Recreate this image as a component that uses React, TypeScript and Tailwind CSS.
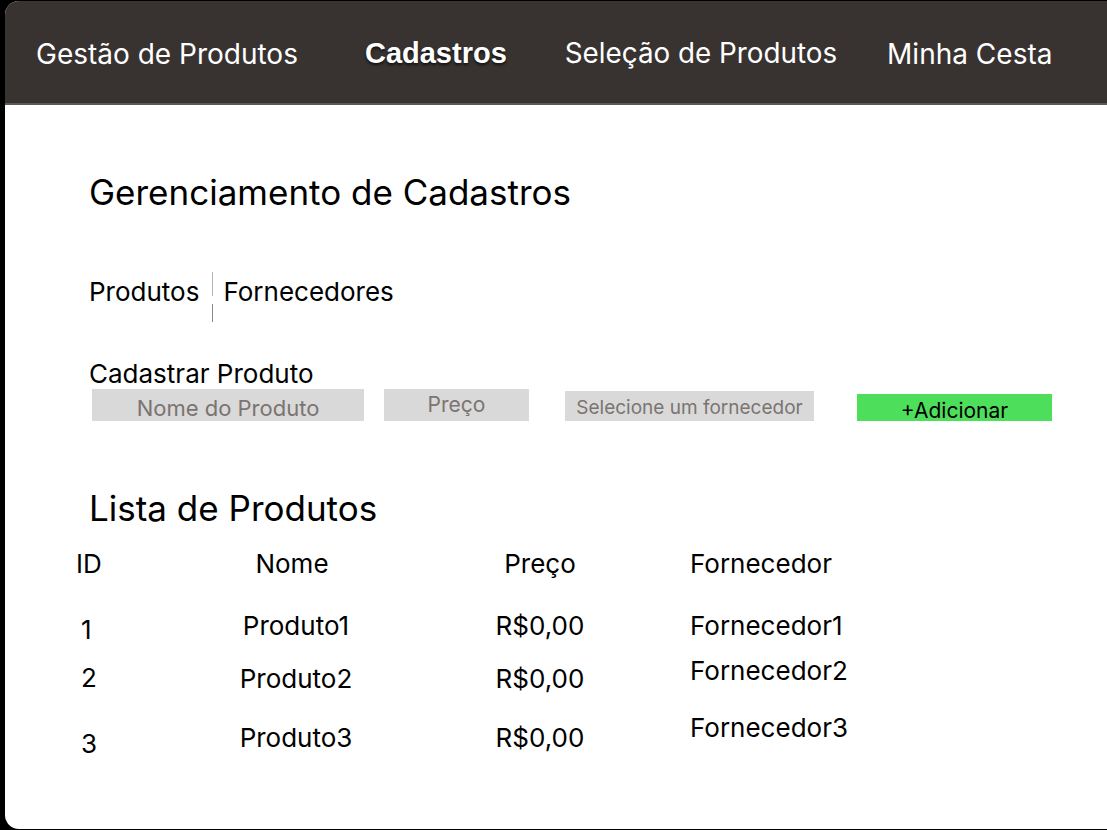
import React from "react";

const inter = "font-['Inter','Noto_Sans',sans-serif]";

const rows = [
  { id: "1", nome: "Produto1", preco: "R$0,00", forn: "Fornecedor1", h: "h-[52px]", idMt: "mt-[4px]", nMt: "mt-0", pMt: "mt-0", fMt: "mt-0" },
  { id: "2", nome: "Produto2", preco: "R$0,00", forn: "Fornecedor2", h: "h-[62px]", idMt: "mt-0", nMt: "mt-[1px]", pMt: "mt-[1px]", fMt: "mt-[-7px]" },
  { id: "3", nome: "Produto3", preco: "R$0,00", forn: "Fornecedor3", h: "h-[52px]", idMt: "mt-[4px]", nMt: "mt-[-2px]", pMt: "mt-[-2px]", fMt: "mt-[-12px]" },
];

const App: React.FC = () => {
  return (
    <div className="min-h-[830px] bg-black pl-[5px] pt-[1px]">
      <div className={`h-[828px] bg-white rounded-l-[14px] overflow-hidden ${inter}`}>
        {/* barra de navegação */}
        <nav className="h-[104px] bg-[#383331] border-b-2 border-[#5c5755] flex items-center text-white text-[28px] pt-[3px]">
          <span className="ml-[31px]">Gestão de Produtos</span>
          <span className="ml-[67px] text-[29px] font-['Liberation_Sans',Arial,sans-serif] font-bold [text-shadow:0_2px_3px_rgba(0,0,0,0.7)]">
            Cadastros
          </span>
          <span className="ml-[58px] text-[27.8px]">Seleção de Produtos</span>
          <span className="ml-[50px]">Minha Cesta</span>
        </nav>

        <main className="pl-[84px] text-black">
          <h1 className="mt-[67px] text-[35px] leading-[40px]">Gerenciamento de Cadastros</h1>

          {/* abas */}
          <div className="mt-[60px] flex items-start text-[26px]">
            <span className="leading-[40px]">Produtos</span>
            <div className="ml-[13px] w-px h-[50px] flex flex-col">
              <div className="h-[24px] bg-[#b5b5b5]" />
              <div className="h-[8px] bg-white" />
              <div className="flex-1 bg-[#8a8a8a]" />
            </div>
            <span className="ml-[10px] leading-[40px]">Fornecedores</span>
          </div>

          {/* formulário */}
          <h2 className="mt-[37px] text-[26px] leading-[30px]">Cadastrar Produto</h2>
          <div className="flex items-start">
            <div className="ml-[3px] w-[272px] h-[32px] bg-[#d9d9d9] flex items-center justify-center text-[22px] text-[#7b7471] pt-[7px]">
              Nome do Produto
            </div>
            <div className="ml-[20px] w-[145px] h-[32px] bg-[#d9d9d9] flex items-start justify-center text-[21px] text-[#7b7471]">
              Preço
            </div>
            <div className="ml-[36px] mt-[2px] w-[249px] h-[30px] bg-[#d9d9d9] flex items-center justify-center text-[19px] text-[#7b7471] pt-[5px]">
              Selecione um fornecedor
            </div>
            <button className="ml-[43px] mt-[5px] w-[195px] h-[27px] bg-[#4ddf5c] text-[21px] text-black flex items-end justify-center leading-[22px] pb-[1px]">
              <span className="translate-y-[2px]">+Adicionar</span>
            </button>
          </div>

          {/* lista */}
          <h2 className="mt-[67px] text-[35px] leading-[40px]">Lista de Produtos</h2>
        </main>

        <div className="ml-[71px] mt-[20px] text-[26px] text-black">
          <div className="grid grid-cols-[138px_164px_312px_1fr] h-[62px] leading-[32px]">
            <span>ID</span>
            <span className="text-center pr-[8px]">Nome</span>
            <span className="text-center pl-[12px]">Preço</span>
            <span>Fornecedor</span>
          </div>
          {rows.map((r) => (
            <div key={r.id} className={`grid grid-cols-[138px_164px_312px_1fr] leading-[32px] ${r.h}`}>
              <span className={`pl-[5px] ${r.idMt}`}>{r.id}</span>
              <span className={`text-center ${r.nMt}`}>{r.nome}</span>
              <span className={`text-center pl-[12px] ${r.pMt}`}>{r.preco}</span>
              <span className={r.fMt}>{r.forn}</span>
            </div>
          ))}
        </div>
      </div>
    </div>
  );
};

export default App;
